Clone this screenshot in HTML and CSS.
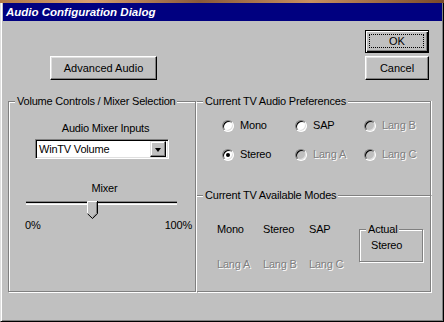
FILE: index.html
```html
<!DOCTYPE html>
<html lang="en">
<head>
  <title>Audio Configuration Dialog</title>

  <link rel="stylesheet" href="styles.css">
</head>
<body>

  <div class="window">
    <div class="titlebar">Audio Configuration Dialog</div>

    <div class="content">
      <div class="top-row">
        <button class="btn advanced">Advanced Audio</button>
        <div class="side-buttons">
          <button class="btn ok">OK</button>
          <button class="btn cancel">Cancel</button>
        </div>
      </div>

      <div class="groups">
        <fieldset class="group mixer">
          <legend>Volume Controls / Mixer Selection</legend>
          <div class="caption inputs-label">Audio Mixer Inputs</div>
          <div class="select">
            <span>WinTV Volume</span>
            <span class="drop"><span class="arrow"></span></span>
          </div>
          <div class="caption mixer-label">Mixer</div>
          <div class="slider">
            <div class="track"></div>
            <svg class="thumb" width="11" height="18" viewBox="0 0 11 18">
              <polygon points="0,0 11,0 11,13 5.5,18 0,13" fill="#c0c0c0"/>
              <polyline points="0.5,13 0.5,0.5 10,0.5" fill="none" stroke="#fff"/>
              <polyline points="10.5,0 10.5,12.7 5.5,17.5 0.5,12.7" fill="none" stroke="#000"/>
              <polyline points="9.5,1 9.5,12.3 5.5,16.2" fill="none" stroke="#808080"/>
            </svg>
          </div>
          <div class="scale"><span>0%</span><span>100%</span></div>
        </fieldset>

        <div class="tv">
          <fieldset class="group prefs">
            <legend>Current TV Audio Preferences</legend>
            <div class="radios">
              <label class="opt"><span class="radio"></span>Mono</label>
              <label class="opt"><span class="radio"></span>SAP</label>
              <label class="opt off"><span class="radio"></span>Lang B</label>
              <label class="opt"><span class="radio checked"></span>Stereo</label>
              <label class="opt off"><span class="radio"></span>Lang A</label>
              <label class="opt off"><span class="radio"></span>Lang C</label>
            </div>
          </fieldset>

          <fieldset class="group modes">
            <legend>Current TV Available Modes</legend>
            <div class="modes-row">
              <div class="mode-grid">
                <span>Mono</span>
                <span>Stereo</span>
                <span>SAP</span>
                <span class="off">Lang A</span>
                <span class="off">Lang B</span>
                <span class="off">Lang C</span>
              </div>
              <fieldset class="group actual">
                <legend>Actual</legend>
                <div class="actual-value">Stereo</div>
              </fieldset>
            </div>
          </fieldset>
        </div>
      </div>
    </div>
  </div>

</body>
</html>
```

FILE: styles.css
```css
* {
  box-sizing: border-box;
}

body {
  margin: 0;
  background: linear-gradient(90deg, #b07a4a, #d8a070 20%, #8a5a3a 45%, #c89060 70%, #7a4a2a);
  font-family: "Liberation Sans", Arial, sans-serif;
  font-size: 11px;
  line-height: 13px;
  letter-spacing: -0.2px;
  color: #000;
}

.window {
  margin-top: 3px;
  height: 319px;
  background-color: #c0c0c0;
  border-left: 1px solid #dfdfdf;
  border-right: 1px solid #000;
  border-bottom: 1px solid #000;
  box-shadow: inset 1px 0 0 #fff, inset -1px -1px 0 #808080;
  padding: 0 1px 1px 2px;
  display: flex;
  flex-direction: column;
}

.titlebar {
  height: 18px;
  background-color: #000080;
  color: white;
  font-weight: bold;
  font-style: italic;
  font-size: 11.5px;
  line-height: 18px;
  letter-spacing: 0;
  padding-left: 3px;
}

.content {
  padding-top: 9px;
}

/* buttons */

.top-row {
  display: flex;
  justify-content: space-between;
  height: 50px;
}

.btn {
  position: relative;
  font: inherit;
  letter-spacing: 0;
  color: #000;
  background-color: #c0c0c0;
  border: 1px solid;
  border-color: #fff #000 #000 #fff;
  box-shadow: inset -1px -1px 0 #808080, inset 1px 1px 0 #dfdfdf;
  padding: 0;
}

.advanced {
  align-self: flex-end;
  margin-left: 47px;
  width: 107px;
  height: 24px;
}

.side-buttons {
  display: flex;
  flex-direction: column;
  gap: 3px;
  margin-right: 13px;
}

.side-buttons .btn {
  width: 64px;
}

.ok {
  height: 23px;
  border-color: #000;
  box-shadow: inset 1px 1px 0 #fff, inset -1px -1px 0 #000, inset -2px -2px 0 #808080;
}

.ok::after {
  content: "";
  position: absolute;
  left: 3px;
  top: 3px;
  right: 4px;
  bottom: 4px;
  border: 1px dotted #000;
}

.cancel {
  height: 24px;
}

/* group boxes */

.groups {
  display: flex;
  margin-top: 15px;
  margin-left: 5px;
}

fieldset {
  margin: 0;
  padding: 0;
  min-width: 0;
}

.group {
  border: 1px solid #808080;
  box-shadow: inset 1px 1px 0 #fff, 1px 1px 0 #fff;
}

.group legend {
  margin-left: 6px;
  padding: 0 2px;
  background-color: #c0c0c0;
  line-height: 13px;
}

.mixer {
  width: 188px;
  height: 197px;
}

.caption {
  text-align: center;
}

.inputs-label {
  margin-top: 14px;
  padding-left: 7px;
}

.select {
  margin-top: 4px;
  margin-left: 26px;
  width: 134px;
  height: 20px;
  background-color: white;
  border: 1px solid;
  border-color: #808080 #fff #fff #808080;
  box-shadow: inset 1px 1px 0 #000, inset -1px -1px 0 #dfdfdf;
  display: flex;
  align-items: center;
  padding: 2px 2px 2px 3px;
}

.drop {
  margin-left: auto;
  width: 16px;
  height: 16px;
  background-color: #c0c0c0;
  border: 1px solid;
  border-color: #dfdfdf #000 #000 #dfdfdf;
  box-shadow: inset -1px -1px 0 #808080, inset 1px 1px 0 #fff;
  display: flex;
  align-items: center;
  justify-content: center;
}

.arrow {
  width: 0;
  height: 0;
  border-left: 3.5px solid transparent;
  border-right: 3.5px solid transparent;
  border-top: 4px solid #000;
  margin-top: 1px;
}

.mixer-label {
  margin-top: 23px;
  padding-left: 5px;
}

.slider {
  position: relative;
  margin-top: 3px;
  margin-left: 17px;
  width: 151px;
  height: 18px;
}

.track {
  margin-top: 6px;
  height: 4px;
  border-top: 1px solid #808080;
  border-bottom: 1px solid #fff;
  background-color: #000;
  box-shadow: inset 0 -1px 0 #dfdfdf;
}

.thumb {
  position: absolute;
  left: 61px;
  top: 0;
}

.scale {
  display: flex;
  justify-content: space-between;
  margin-left: 16px;
  width: 167px;
}

/* tv side */

.tv {
  display: flex;
  flex-direction: column;
  width: 234px;
  margin-left: 1px;
}

.prefs {
  height: 100px;
  border-left: none;
  border-bottom: none;
  box-shadow: inset 0 1px 0 #fff, 1px 0 0 #fff;
}

.radios {
  display: grid;
  grid-template-columns: 73px 69px auto;
  row-gap: 16px;
  margin-top: 11px;
  padding-left: 25px;
}

.opt {
  display: flex;
  align-items: center;
  gap: 6px;
  height: 13px;
}

.radio {
  position: relative;
  width: 12px;
  height: 12px;
  border-radius: 50%;
  background-color: white;
  border: 1px solid;
  border-color: #808080 #fff #fff #808080;
  box-shadow: inset 1px 1px 0 #000, inset -1px -1px 0 #dfdfdf;
}

.opt.off .radio {
  background-color: #c0c0c0;
}

.radio.checked::after {
  content: "";
  position: absolute;
  left: 3px;
  top: 3px;
  width: 4px;
  height: 4px;
  border-radius: 50%;
  background-color: #000;
}

.off {
  color: #808080;
  text-shadow: 1px 1px 0 #fff;
}

.modes {
  height: 103px;
  margin-top: -6px;
  border-left: none;
  box-shadow: inset 0 1px 0 #fff, 1px 1px 0 #fff;
}

.modes-row {
  display: flex;
  align-items: flex-start;
  margin-top: 21px;
  padding-left: 20px;
}

.mode-grid {
  display: grid;
  grid-template-columns: 46px 46px 46px;
  row-gap: 22px;
}

.actual {
  width: 64px;
  height: 39px;
  margin-left: 4px;
}

.actual-value {
  margin-top: 3px;
  padding-left: 11px;
}
```
